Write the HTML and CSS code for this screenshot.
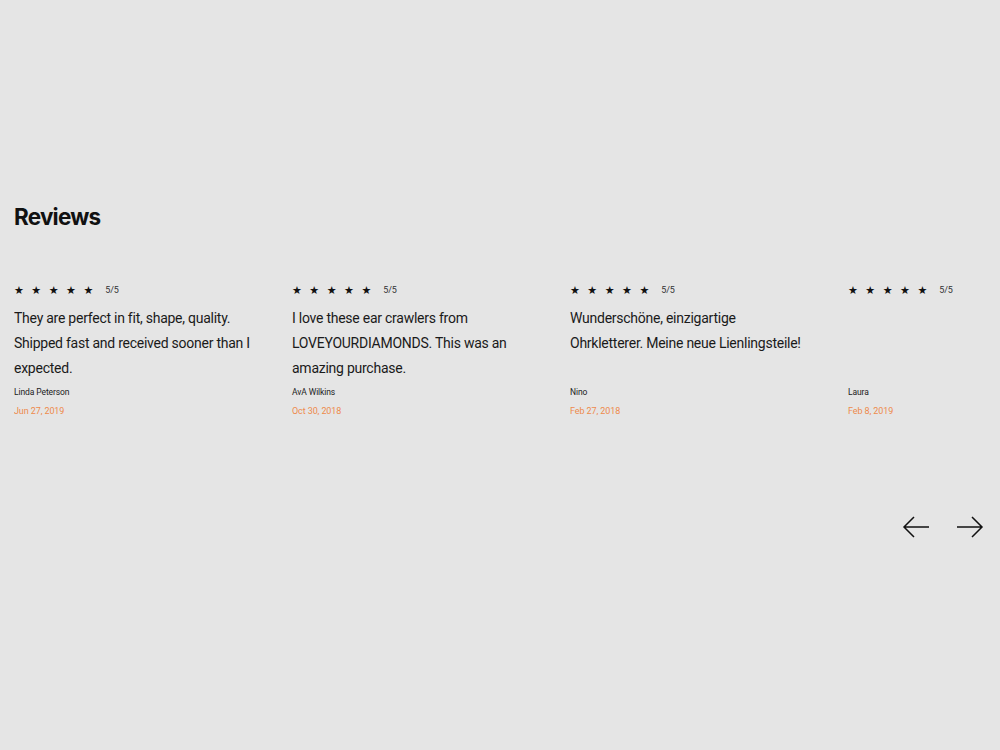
FILE: index.html
```html
<html>
<head>
  <meta charset="utf-8">
  <link rel="stylesheet" href="styles.css">
</head>
<body>
  <div class="reviews">
    <h2 class="title">Reviews</h2>

    <div class="track">
      <div class="card">
        <div class="rating"><span class="stars">★ ★ ★ ★ ★</span><span class="score">5/5</span></div>
        <p class="text">They are perfect in fit, shape, quality. Shipped fast and received sooner than I expected.</p>
        <div class="author">Linda Peterson</div>
        <div class="date">Jun 27, 2019</div>
      </div>
      <div class="card">
        <div class="rating"><span class="stars">★ ★ ★ ★ ★</span><span class="score">5/5</span></div>
        <p class="text">I love these ear crawlers from LOVEYOURDIAMONDS. This was an amazing purchase.</p>
        <div class="author">AvA Wilkins</div>
        <div class="date">Oct 30, 2018</div>
      </div>
      <div class="card">
        <div class="rating"><span class="stars">★ ★ ★ ★ ★</span><span class="score">5/5</span></div>
        <p class="text">Wunderschöne, einzigartige Ohrkletterer. Meine neue Lienlingsteile!</p>
        <div class="author">Nino</div>
        <div class="date">Feb 27, 2018</div>
      </div>
      <div class="card">
        <div class="rating"><span class="stars">★ ★ ★ ★ ★</span><span class="score">5/5</span></div>
        <p class="text"></p>
        <div class="author">Laura</div>
        <div class="date">Feb 8, 2019</div>
      </div>
    </div>

    <div class="nav">
      <button class="arrow">
        <svg width="28" height="22" viewBox="0 0 28 22"><path d="M27 11H2M12 1L2 11l10 10" fill="none" stroke="#111" stroke-width="1.5"/></svg>
      </button>
      <button class="arrow">
        <svg width="28" height="22" viewBox="0 0 28 22"><path d="M1 11h25M16 1l10 10-10 10" fill="none" stroke="#111" stroke-width="1.5"/></svg>
      </button>
    </div>
  </div>
</body>
</html>
```

FILE: styles.css
```css
body {
	margin: 0;
	background: #e5e5e5;
	font-family: Roboto, "Liberation Sans", sans-serif;
	color: #111;
	overflow: hidden;
}

.reviews {
	padding: 203px 16px 0 14px;
}

.title {
	margin: 0;
	font-family: Inter, sans-serif;
	font-size: 22.5px;
	line-height: 28px;
	font-weight: 700;
	letter-spacing: -0.8px;
}

.track {
	display: grid;
	grid-template-columns: repeat(4, 278px);
	margin-top: 52px;
	overflow: hidden;
	margin-right: -16px;
}

.card {
	padding-right: 40px;
}

.rating {
	display: flex;
	align-items: center;
	height: 14px;
}
.stars {
	font-size: 11px;
	word-spacing: 4px;
	font-family: "DejaVu Sans", sans-serif;
}
.score {
	margin-left: 12px;
	font-size: 9px;
	letter-spacing: -0.2px;
	color: #333;
}

.text {
	margin: 9px 0 0;
	min-height: 75px;
	font-size: 14px;
	line-height: 25px;
	letter-spacing: -0.25px;
	color: #1a1a1a;
}

.author {
	margin-top: 6px;
	font-size: 8.5px;
	letter-spacing: -0.1px;
	color: #222;
}

.date {
	margin-top: 9px;
	font-size: 9px;
	letter-spacing: -0.1px;
	color: #ee8a4c;
}

.nav {
	display: flex;
	justify-content: flex-end;
	gap: 26px;
	margin-top: 100px;
}

.arrow {
	background: none;
	border: none;
	padding: 0;
	width: 28px;
	height: 22px;
	cursor: pointer;
}
```
